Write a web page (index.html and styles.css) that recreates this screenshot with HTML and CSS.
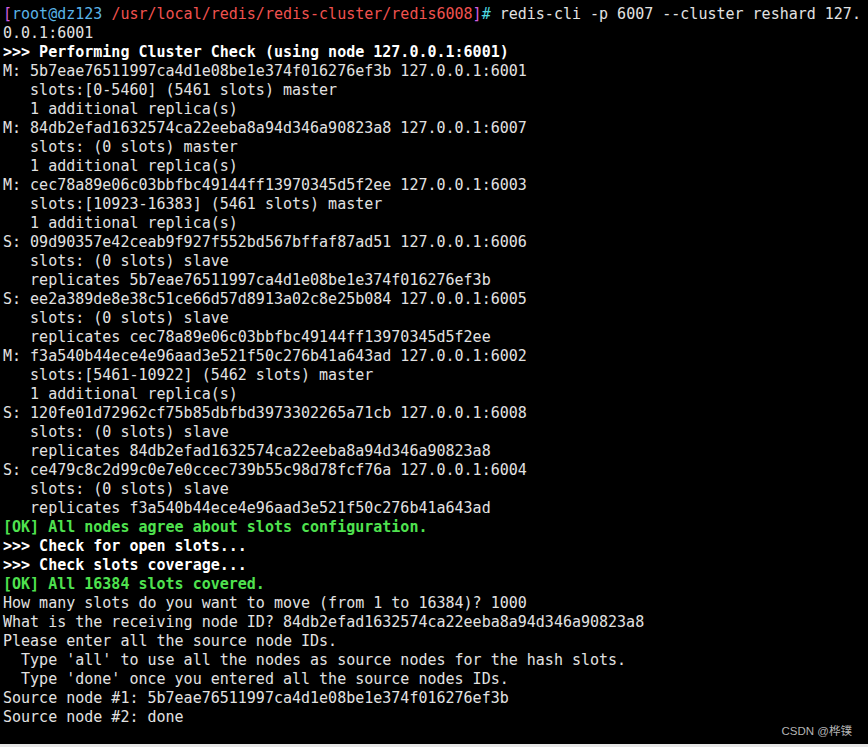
FILE: index.html
```html
<!DOCTYPE html>
<html lang="zh">
<head>
    <meta charset="UTF-8">
    <title>redis-cli reshard</title>
    <link rel="stylesheet" href="styles.css">
</head>
<body>
    <div class="terminal">
<pre class="output"><span class="br">[</span><span class="host">root@dz123</span> <span class="path">/usr/local/redis/redis-cluster/redis6008</span><span class="br">]</span><span class="hash">#</span> redis-cli -p 6007 --cluster reshard 127.
0.0.1:6001
<b>&gt;&gt;&gt; Performing Cluster Check (using node 127.0.0.1:6001)</b>
M: 5b7eae76511997ca4d1e08be1e374f016276ef3b 127.0.0.1:6001
   slots:[0-5460] (5461 slots) master
   1 additional replica(s)
M: 84db2efad1632574ca22eeba8a94d346a90823a8 127.0.0.1:6007
   slots: (0 slots) master
   1 additional replica(s)
M: cec78a89e06c03bbfbc49144ff13970345d5f2ee 127.0.0.1:6003
   slots:[10923-16383] (5461 slots) master
   1 additional replica(s)
S: 09d90357e42ceab9f927f552bd567bffaf87ad51 127.0.0.1:6006
   slots: (0 slots) slave
   replicates 5b7eae76511997ca4d1e08be1e374f016276ef3b
S: ee2a389de8e38c51ce66d57d8913a02c8e25b084 127.0.0.1:6005
   slots: (0 slots) slave
   replicates cec78a89e06c03bbfbc49144ff13970345d5f2ee
M: f3a540b44ece4e96aad3e521f50c276b41a643ad 127.0.0.1:6002
   slots:[5461-10922] (5462 slots) master
   1 additional replica(s)
S: 120fe01d72962cf75b85dbfbd3973302265a71cb 127.0.0.1:6008
   slots: (0 slots) slave
   replicates 84db2efad1632574ca22eeba8a94d346a90823a8
S: ce479c8c2d99c0e7e0ccec739b55c98d78fcf76a 127.0.0.1:6004
   slots: (0 slots) slave
   replicates f3a540b44ece4e96aad3e521f50c276b41a643ad
<b class="ok">[OK] All nodes agree about slots configuration.</b>
<b>&gt;&gt;&gt; Check for open slots...</b>
<b>&gt;&gt;&gt; Check slots coverage...</b>
<b class="ok">[OK] All 16384 slots covered.</b>
How many slots do you want to move (from 1 to 16384)? 1000
What is the receiving node ID? 84db2efad1632574ca22eeba8a94d346a90823a8
Please enter all the source node IDs.
  Type 'all' to use all the nodes as source nodes for the hash slots.
  Type 'done' once you entered all the source nodes IDs.
Source node #1: 5b7eae76511997ca4d1e08be1e374f016276ef3b
Source node #2: done</pre>
        <span class="watermark">CSDN @桦镤</span>
    </div>
</body>
</html>
```

FILE: styles.css
```css
/* terminal screenshot */
body {
    margin: 0;
    padding: 0;
    background: #e6e6e6;
}

.terminal {
    position: relative;
    height: 744px;
    background: #000;
    overflow: hidden;
}

.output {
    margin: 0;
    padding: 5px 0 0 3px;
    font-family: "DejaVu Sans Mono", monospace;
    font-size: 15px;
    line-height: 19px;
    color: #e2e2e2;
}

.output b {
    color: #fff;
    font-weight: bold;
}

.output b.ok {
    color: #4fe24f;
}

.br {
    color: #d35fe0;
}

.host {
    color: #5ab4e8;
}

.path {
    color: #f0524f;
}

.hash {
    color: #4fd8e0;
}

.watermark {
    position: absolute;
    right: 16px;
    bottom: 6px;
    font-family: "Liberation Sans", "Noto Sans CJK SC", sans-serif;
    font-size: 11.5px;
    color: #b4b4b4;
}
```
